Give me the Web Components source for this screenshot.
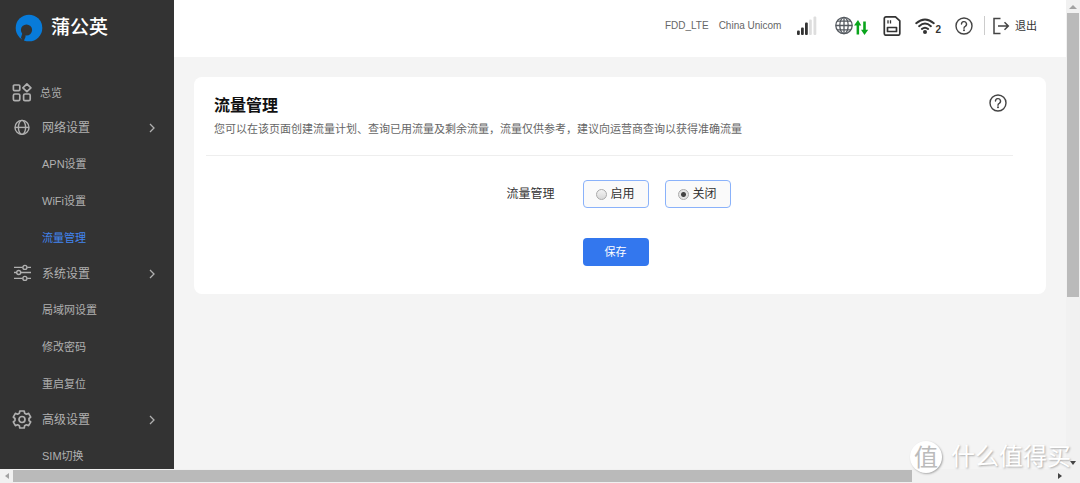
<!DOCTYPE html>
<html lang="zh-CN">
<head>
<meta charset="utf-8">
<meta name="viewport" content="width=device-width, initial-scale=1">
<title>流量管理</title>
<style>
  html, body { margin: 0; height: 100%; }
  body { font: 11px/16px "Liberation Sans", "Noto Sans CJK SC", sans-serif; color: #333; overflow: hidden; }
</style>
</head>
<body>
<router-app></router-app>
<script>
const define = (name, html, setup) => customElements.define(name, class extends HTMLElement {
  constructor() {
    super();
    const t = document.createElement('template');
    t.innerHTML = html;
    this.attachShadow({ mode: 'open' }).append(t.content.cloneNode(true));
  }
  connectedCallback() { if (setup) setup(this, this.shadowRoot); }
});

const ICONS = {
  overview: ['0 0 20 20', '<g fill="none" stroke="currentColor" stroke-width="1.7"><rect x="1.4" y="2" width="6.4" height="5.6" rx="1"/><rect x="1.4" y="11" width="6.4" height="6.6" rx="1.4"/><rect x="11.6" y="11" width="6.6" height="6.6" rx="1.4"/><path d="M14.9 .9l4 3.9-4 3.9-4-3.9z" stroke-linejoin="round"/></g>'],
  globe: ['0 0 20 20', '<g fill="none" stroke="currentColor" stroke-width="1.4"><circle cx="10" cy="9.4" r="7"/><ellipse cx="10" cy="9.4" rx="3.6" ry="7"/><path d="M3 9.4h14"/></g>'],
  sliders: ['0 0 20 20', '<g fill="none" stroke="currentColor" stroke-width="1.4"><path d="M2 3.4h8.6M15.200 3.400H19M2 8.500h2.400M9 8.500h10M2 14.400h8.600M15.200 14.400H19"/><circle cx="12.9" cy="3.4" r="2"/><circle cx="6.7" cy="8.5" r="2"/><circle cx="12.9" cy="14.4" r="2"/></g>'],
  gear: ['0 0 20 20', '<g fill="none" stroke="currentColor" stroke-width="1.7" stroke-linejoin="round"><path d="M7.8 1h4.4l.4 2.200 1.800 1 2.200-.8 2.100 3.700-1.700 1.400v2l1.700 1.400-2.100 3.700-2.200-.8-1.800 1-.4 2.200H7.800l-.4-2.200-1.800-1-2.200.8-2.100-3.700L3 10.500v-2L1.300 7.100l2.100-3.700 2.200.8 1.800-1z"/><circle cx="10" cy="9.5" r="3"/></g>'],
  chevron: ['0 0 8 10', '<path d="M2 1l4 4-4 4" fill="none" stroke="currentColor" stroke-width="1.3"/>'],
  signal: ['0 0 20 20', '<g fill="#333"><rect x="0" y="14.5" width="2.8" height="4.5" rx="1"/><rect x="4" y="11.5" width="2.8" height="7.5" rx="1"/><rect x="8" y="6.5" width="2.8" height="12.5" rx="1"/></g><g fill="#dedede"><rect x="12" y="3.5" width="2.8" height="15.5" rx="1"/><rect x="16.5" y="0.5" width="2.8" height="18.5" rx="1"/></g>'],
  network: ['0 0 34 20', '<g fill="none" stroke="#555a60" stroke-width="1.3"><circle cx="9" cy="9.5" r="8.2"/><ellipse cx="9" cy="9.5" rx="4.2" ry="8.2"/><path d="M9 1.3v16.4M.8 9.5h16.4M2 5.2h14M2 13.8h14"/></g><path d="M21.6 18.5V9.5H19L23 4l3.300 5.500h-2.200v9zM28.200 5.500v8.300H26l3.500 5.200 3.700-5.200h-2.400V5.500z" fill="#0aa51c"/>'],
  sim: ['0 0 18 20', '<g fill="none" stroke="#333" stroke-width="1.7" stroke-linejoin="round"><path d="M3 .9h9.500l4.300 4v12.600a1.700 1.700 0 0 1-1.700 1.700H3a1.700 1.700 0 0 1-1.700-1.700V2.600A1.700 1.700 0 0 1 3 .9z"/><path d="M4.500 11.500h9v4h-9z"/><path d="M5 4.300v3.200M7.500 4.300v3.200" stroke-width="1.300"/></g>'],
  wifi: ['0 0 20 18', '<g fill="none" stroke="#333" stroke-width="1.9" stroke-linecap="round"><path d="M1.200 6.200Q10-1.400 18.800 6.200M4.100 9.200q5.900-5.200 11.800 0M6.900 12q3.100-2.700 6.200 0"/></g><circle cx="10" cy="15" r="2" fill="#333"/>'],
  help: ['0 0 18 18', '<g fill="none" stroke="currentColor" stroke-width="1.4"><circle cx="9" cy="9" r="8"/><path d="M6.500 7.100a2.500 2.500 0 1 1 3.700 2.200Q9 9.900 9 11.200" stroke-linecap="round"/></g><circle cx="9" cy="13.3" r="1" fill="currentColor"/>'],
  logout: ['0 0 18 18', '<path d="M8.500 1.500H2v15h6.500M6 9h10M12.500 5.300L16.300 9l-3.800 3.700" fill="none" stroke="#444" stroke-width="1.5"/>'],
  logo: ['0 0 28 28', '<circle cx="14" cy="14" r="13.3" fill="#087bd9"/><circle cx="11.5" cy="16" r="5.6" fill="#333"/><path d="M7.500 19l-1.500 4.500L8.300 28l2.200-5V20z" fill="#333"/>'],
  up: ['0 0 8 4', '<path d="M0 4l4-4 4 4z" fill="#a3a3a3"/>'],
  down: ['0 0 8 4', '<path d="M1 0h6L4 4z" fill="#444"/>'],
  left: ['0 0 4 8', '<path d="M4 1v6L0 4z" fill="#a3a3a3"/>'],
  right: ['0 0 4 8', '<path d="M0 1v6l4-3z" fill="#444"/>']
};
define('ui-icon', `<style>:host{display:block;flex:none;line-height:0}</style>`, (el, root) => {
  const [box, body] = ICONS[el.getAttribute('name')];
  const [, , w, h] = box.split(' ');
  root.innerHTML += `<svg aria-hidden="true" width="${w}" height="${h}" viewBox="${box}">${body}</svg>`;
});

define('nav-group', `<style>
  :host { display: block; }
  a { display: grid; grid-template-columns: 20px 1fr 8px; align-items: center; gap: var(--gap, 10px);
      height: 35px; padding: 0 18px 0 12px; color: #b0b0b0; text-decoration: none; font-size: var(--size, 12px); }
</style>
<a href="#"><span></span></a><slot></slot>`, (el, root) => {
  const link = root.querySelector('a');
  root.querySelector('span').textContent = el.getAttribute('label');
  link.insertAdjacentHTML('afterbegin', `<ui-icon name="${el.getAttribute('icon')}"></ui-icon>`);
  if (!el.hasAttribute('plain')) link.insertAdjacentHTML('beforeend', '<ui-icon name="chevron"></ui-icon>');
});

define('nav-item', `<style>
  :host { display: block; color: #b0b0b0; }
  :host([active]) { color: #4285f0; }
  a { display: flex; align-items: center; height: 37px; padding-left: 42px; color: inherit; text-decoration: none; }
</style><a href="#"><slot></slot></a>`);

define('side-bar', `<style>
  :host { display: block; background: #333; overflow: hidden; }
  .brand { display: flex; align-items: center; gap: 8px; height: 56px; padding: 0 15px; margin-bottom: 19px;
    color: #fff; font-size: 19px; line-height: 28px; font-weight: 500; }
  nav-group[plain] { --gap: 8px; --size: 11px; }
</style>
<div class="brand"><ui-icon name="logo"></ui-icon><span>蒲公英</span></div>
<nav>
  <nav-group plain icon="overview" label="总览"></nav-group>
  <nav-group icon="globe" label="网络设置">
    <nav-item>APN设置</nav-item><nav-item>WiFi设置</nav-item><nav-item active>流量管理</nav-item>
  </nav-group>
  <nav-group icon="sliders" label="系统设置">
    <nav-item>局域网设置</nav-item><nav-item>修改密码</nav-item><nav-item>重启复位</nav-item>
  </nav-group>
  <nav-group icon="gear" label="高级设置"><nav-item>SIM切换</nav-item></nav-group>
</nav>`);

define('top-bar', `<style>
  :host { display: flex; align-items: center; justify-content: flex-end; height: 51px; padding: 0 29px 6px 0; background: #fff; }
  .net { display: flex; gap: 10px; font-size: 10px; color: #666; margin-right: 16px; }
  .icons { display: flex; align-items: center; gap: 14px; }
  .signal { margin-right: 4px; }
  .wifi { display: flex; align-items: flex-end; font: bold 10px/10px "Liberation Sans", sans-serif; }
  .help { color: #444; }
  a { display: flex; align-items: center; gap: 5px; margin-left: 11px; padding-left: 7px; border-left: 1px solid #ccc; height: 19px; color: #333; text-decoration: none; }
</style>
<div class="net"><span>FDD_LTE</span><span>China Unicom</span></div>
<div class="icons">
  <ui-icon class="signal" name="signal"></ui-icon><ui-icon name="network"></ui-icon><ui-icon name="sim"></ui-icon>
  <span class="wifi"><ui-icon name="wifi"></ui-icon>2</span>
  <ui-icon class="help" name="help"></ui-icon>
</div>
<a href="#"><ui-icon name="logout"></ui-icon>退出</a>`);

define('traffic-card', `<style>
  :host { display: block; background: #fff; border-radius: 8px; padding-bottom: 28px; }
  header { display: flex; justify-content: space-between; margin: 0 33px 0 12px; padding: 17px 6px 17px 8px; border-bottom: 1px solid #eee; }
  h1 { margin: 0 0 3px; font-size: 16px; line-height: 24px; color: #111; }
  p { margin: 0; line-height: 17px; color: #666; }
  header ui-icon { color: #444; }
  form { display: grid; grid-template-columns: 7fr 9fr; column-gap: 28px; row-gap: 30px; padding-top: 24px; align-items: center; }
  .name { text-align: right; font-size: 12px; }
  .choices { display: flex; gap: 16px; }
  label, button { box-sizing: border-box; width: 66px; height: 28px; border-radius: 4px; font: inherit; }
  label { display: flex; align-items: center; justify-content: center; gap: 3px; border: 1px solid #8ab2fa; background: #fafafa; font-size: 12px; }
  input { appearance: none; box-sizing: border-box; margin: 0; width: 11px; height: 11px; border: 1px solid #aaa; border-radius: 50%; background: linear-gradient(#f3f3f3, #d8d8d8); }
  input:checked { background: radial-gradient(circle, #444 0 2px, #e4e4e4 3px); }
  button { grid-column: 2; border: 0; background: #3377ee; color: #fff; }
</style>
<header>
  <div><h1>流量管理</h1><p>您可以在该页面创建流量计划、查询已用流量及剩余流量，流量仅供参考，建议向运营商查询以获得准确流量</p></div>
  <ui-icon name="help"></ui-icon>
</header>
<form>
  <span class="name" id="name">流量管理</span>
  <div class="choices" role="radiogroup" aria-labelledby="name">
    <label><input type="radio" name="plan" value="on">启用</label>
    <label><input type="radio" name="plan" value="off" checked>关闭</label>
  </div>
  <button type="button">保存</button>
</form>`);

define('scroll-track', `<style>
  :host { display: flex; align-items: center; background: #f1f1f1; }
  :host([vertical]) { flex-direction: column; }
  .end { flex: none; display: grid; place-items: center; width: 13px; height: 13px; }
  .track { flex: 1; align-self: stretch; padding: 1px 0; }
  .thumb { width: 86.4%; height: 100%; background: #bababa; }
  :host([vertical]) .track { padding: 0 1px; }
  :host([vertical]) .thumb { width: 100%; height: 64%; }
</style>
<span class="end"></span><div class="track"><div class="thumb"></div></div><span class="end"></span>`, (el, root) => {
  const names = el.hasAttribute('vertical') ? ['up', 'down'] : ['left', 'right'];
  root.querySelectorAll('.end').forEach((end, i) => end.innerHTML = `<ui-icon name="${names[i]}"></ui-icon>`);
});

define('site-mark', `<style>
  :host { display: flex; align-items: center; gap: 9px; color: #fff; font-size: 24px; line-height: 34px; text-shadow: 1px 1px 2px #aaa; }
  .disc { display: grid; place-items: center; width: 32px; height: 32px; border-radius: 50%; background: #fff; color: #bbb; box-shadow: 1px 1px 2px #aaa; text-shadow: none; }
</style><span class="disc">值</span><span>什么值得买</span>`);

define('router-app', `<style>
  :host { position: relative; display: grid; grid-template-columns: 174px 1fr 14px; grid-template-rows: minmax(0, 1fr) 14px; height: 100vh; }
  main { background: #f4f4f4; overflow: hidden; }
  traffic-card { margin: 20px; }
  .bottom { grid-column: 1 / 3; }
  .corner { background: #f1f1f1; }
  site-mark { position: absolute; right: 9px; bottom: 9px; }
</style>
<side-bar></side-bar>
<main><top-bar></top-bar><traffic-card></traffic-card></main>
<scroll-track vertical></scroll-track>
<scroll-track class="bottom"></scroll-track>
<div class="corner"></div>
<site-mark></site-mark>`);
</script>
</body>
</html>
